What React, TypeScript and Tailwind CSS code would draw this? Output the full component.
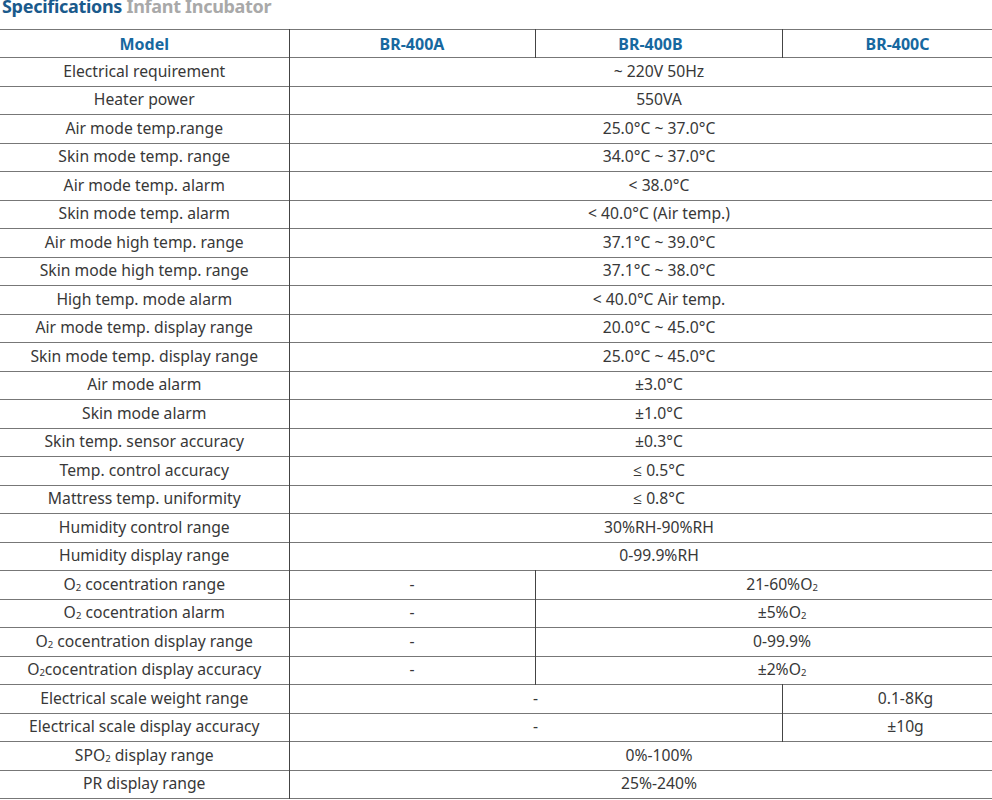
import React from 'react'

type Cell = { text: React.ReactNode; span?: number }
type Row = { label: React.ReactNode; cells: Cell[] }

const O2 = () => (
  <>
    O<sub className="text-[9.5px] relative top-[1px]">2</sub>
  </>
)

const rows: Row[] = [
  { label: 'Electrical requirement', cells: [{ text: '~ 220V 50Hz', span: 3 }] },
  { label: 'Heater power', cells: [{ text: '550VA', span: 3 }] },
  { label: 'Air mode temp.range', cells: [{ text: '25.0°C ~ 37.0°C', span: 3 }] },
  { label: 'Skin mode temp. range', cells: [{ text: '34.0°C ~ 37.0°C', span: 3 }] },
  { label: 'Air mode temp. alarm', cells: [{ text: '< 38.0°C', span: 3 }] },
  { label: 'Skin mode temp. alarm', cells: [{ text: '< 40.0°C (Air temp.)', span: 3 }] },
  { label: 'Air mode high temp. range', cells: [{ text: '37.1°C ~ 39.0°C', span: 3 }] },
  { label: 'Skin mode high temp. range', cells: [{ text: '37.1°C ~ 38.0°C', span: 3 }] },
  { label: 'High temp. mode alarm', cells: [{ text: '< 40.0°C Air temp.', span: 3 }] },
  { label: 'Air mode temp. display range', cells: [{ text: '20.0°C ~ 45.0°C', span: 3 }] },
  { label: 'Skin mode temp. display range', cells: [{ text: '25.0°C ~ 45.0°C', span: 3 }] },
  { label: 'Air mode alarm', cells: [{ text: '±3.0°C', span: 3 }] },
  { label: 'Skin mode alarm', cells: [{ text: '±1.0°C', span: 3 }] },
  { label: 'Skin temp. sensor accuracy', cells: [{ text: '±0.3°C', span: 3 }] },
  { label: 'Temp. control accuracy', cells: [{ text: '≤ 0.5°C', span: 3 }] },
  { label: 'Mattress temp. uniformity', cells: [{ text: '≤ 0.8°C', span: 3 }] },
  { label: 'Humidity control range', cells: [{ text: '30%RH-90%RH', span: 3 }] },
  { label: 'Humidity display range', cells: [{ text: '0-99.9%RH', span: 3 }] },
  {
    label: <><O2 /> cocentration range</>,
    cells: [{ text: '-' }, { text: <>21-60%<O2 /></>, span: 2 }],
  },
  {
    label: <><O2 /> cocentration alarm</>,
    cells: [{ text: '-' }, { text: <>±5%<O2 /></>, span: 2 }],
  },
  {
    label: <><O2 /> cocentration display range</>,
    cells: [{ text: '-' }, { text: '0-99.9%', span: 2 }],
  },
  {
    label: <><O2 />cocentration display accuracy</>,
    cells: [{ text: '-' }, { text: <>±2%<O2 /></>, span: 2 }],
  },
  {
    label: 'Electrical scale weight range',
    cells: [{ text: '-', span: 2 }, { text: '0.1-8Kg' }],
  },
  {
    label: 'Electrical scale display accuracy',
    cells: [{ text: '-', span: 2 }, { text: '±10g' }],
  },
  { label: <>SP<O2 /> display range</>, cells: [{ text: '0%-100%', span: 3 }] },
  { label: 'PR display range', cells: [{ text: '25%-240%', span: 3 }] },
]

export default function App() {
  return (
    <div
      className="w-full h-[800px] overflow-hidden bg-white text-[#383838]"
      style={{ fontFamily: '"Noto Sans", "Open Sans", sans-serif' }}
    >
      <h1 className="text-[18px] font-bold leading-none mt-[-3px] ml-[2px] h-[32px] tracking-[-0.3px]">
        <span className="text-[#1a5a8c]">Specifications</span>{' '}
        <span className="text-[#a9a9a9]">Infant Incubator</span>
      </h1>
      <table className="table-fixed border-collapse w-[1029px] text-[15.7px] leading-none">
        <colgroup>
          <col className="w-[289px]" />
          <col className="w-[246px]" />
          <col className="w-[247px]" />
          <col className="w-[247px]" />
        </colgroup>
        <thead>
          <tr className="h-[28px] border-y border-[#777] text-[16px] font-bold text-[#17689f]">
            <th className="text-center border-r border-[#444]">Model</th>
            <th className="text-center border-r border-[#444]">BR-400A</th>
            <th className="text-center border-r border-[#444] pr-[16px]">BR-400B</th>
            <th className="text-center border-r border-[#444] pr-[16px]">BR-400C</th>
          </tr>
        </thead>
        <tbody>
          {rows.map((row, i) => (
            <tr key={i} className="h-[28.5px] border-b border-[#777]">
              <td className="text-center border-r border-[#444] whitespace-nowrap">{row.label}</td>
              {row.cells.map((c, j) => (
                <td
                  key={j}
                  colSpan={c.span}
                  className="text-center border-r border-[#444] whitespace-nowrap"
                >
                  {c.text}
                </td>
              ))}
            </tr>
          ))}
        </tbody>
      </table>
    </div>
  )
}
